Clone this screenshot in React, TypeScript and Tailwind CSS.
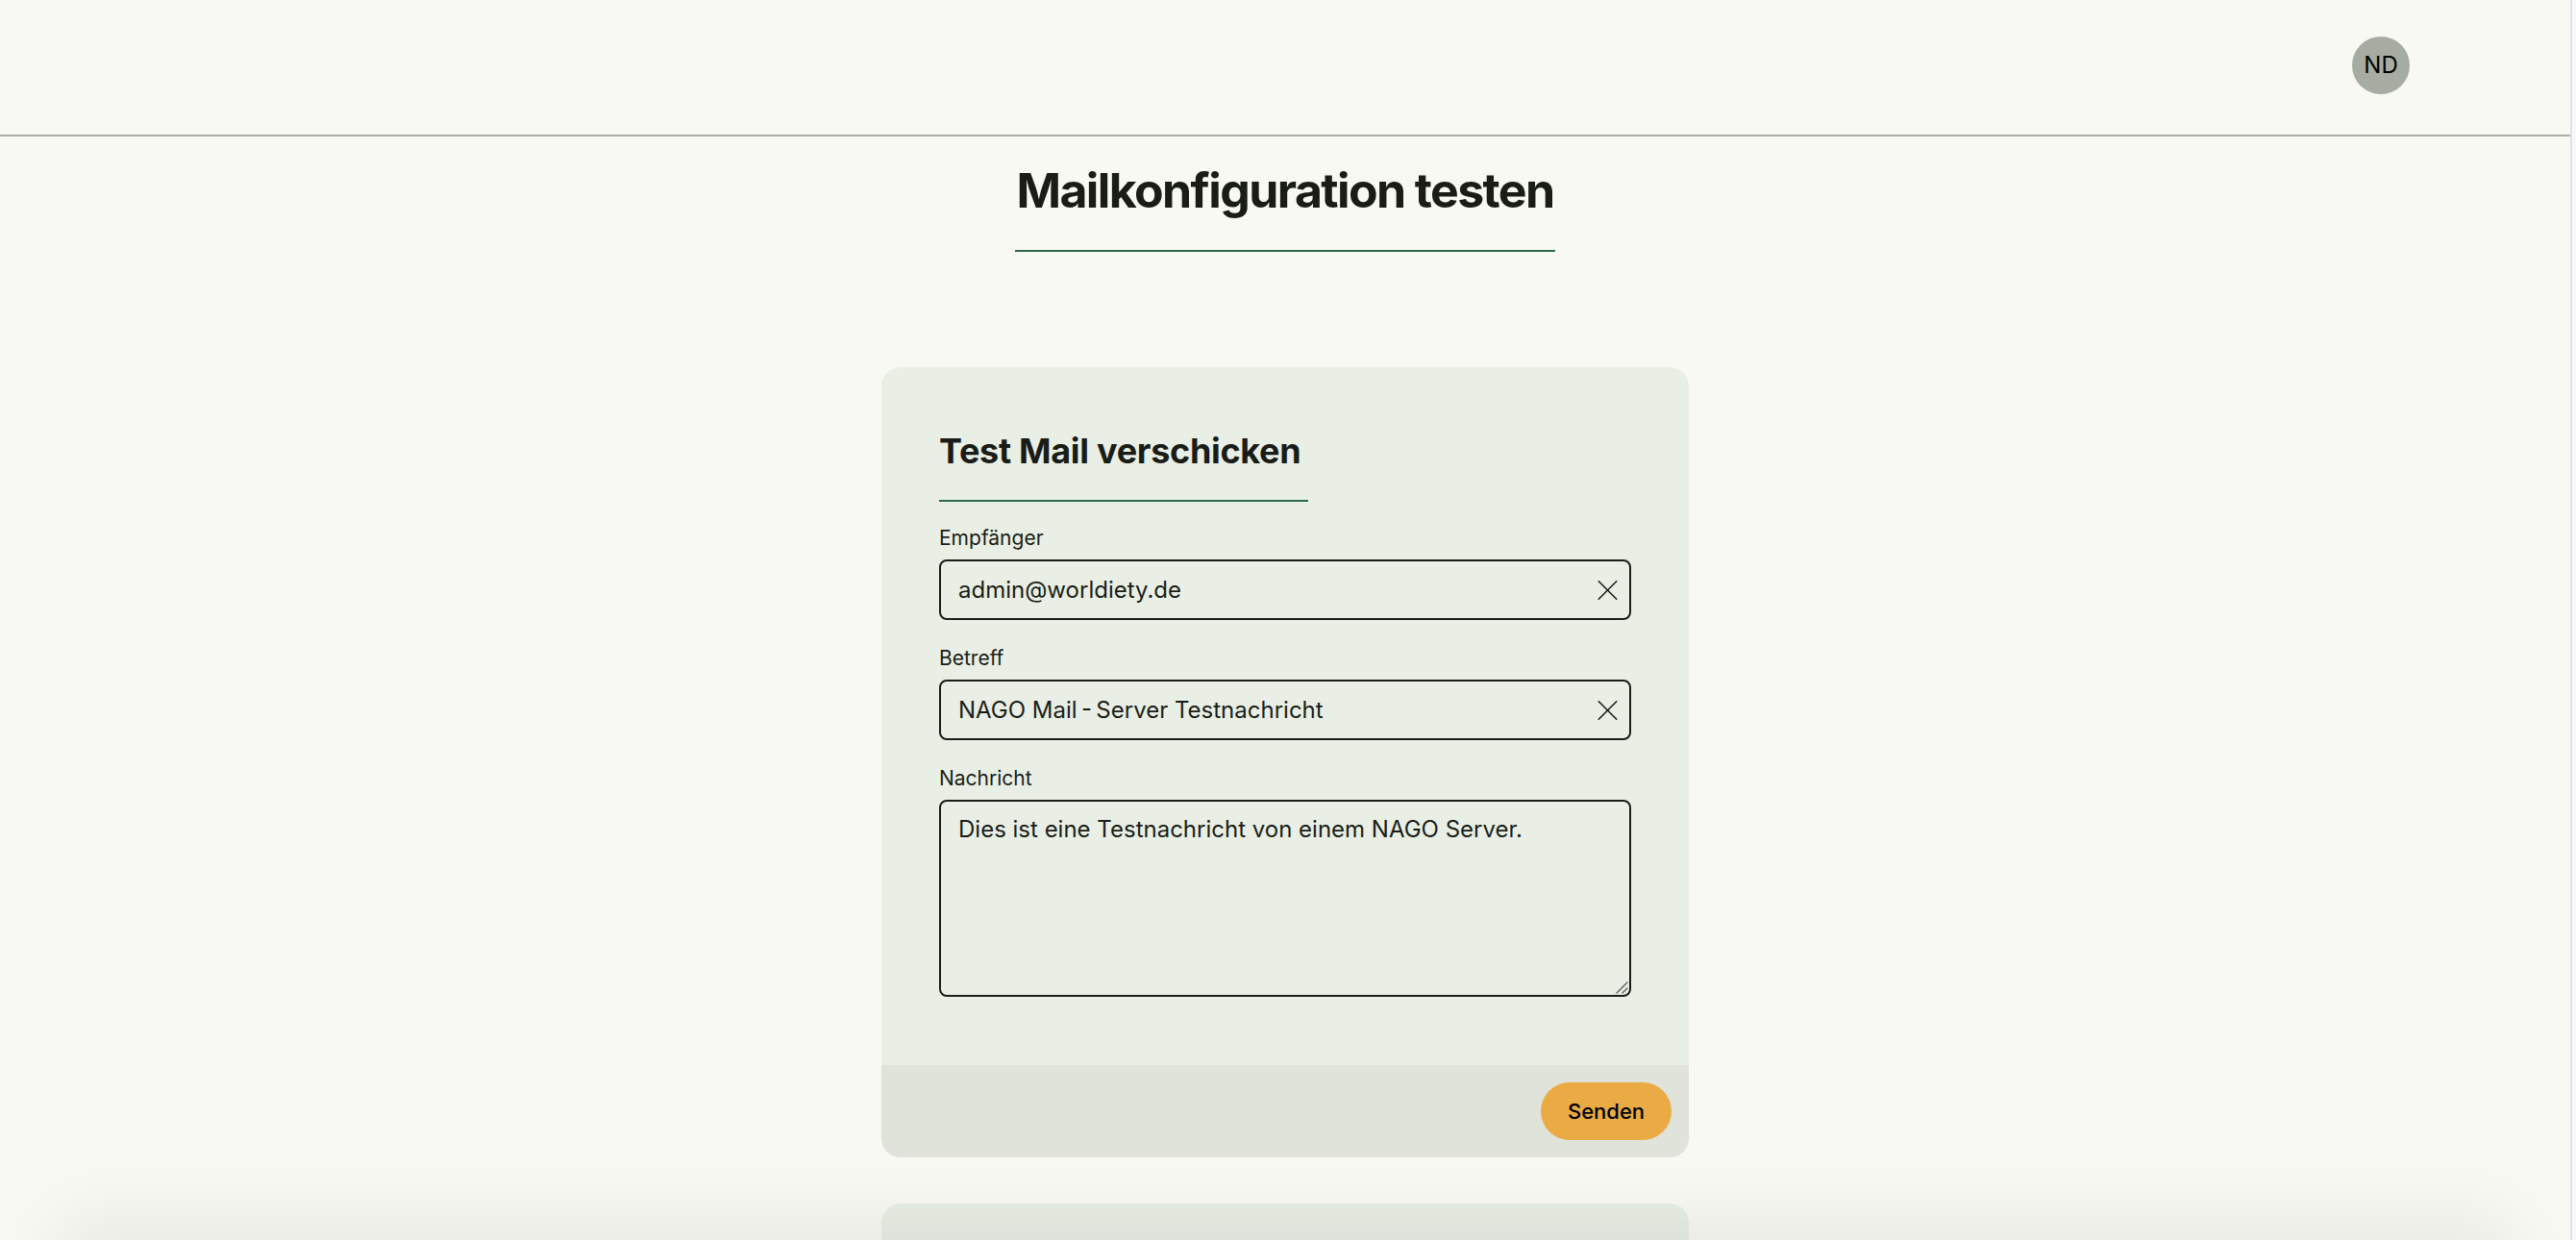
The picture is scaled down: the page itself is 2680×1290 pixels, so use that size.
import { X } from "lucide-react";

const fields = [
  { label: "Empfänger", value: "admin@worldiety.de" },
  { label: "Betreff", value: "NAGO Mail\u2009-\u2009Server Testnachricht" },
];

export default function App() {
  return (
    <div
      className="flex h-[1290px] w-full overflow-hidden bg-[#f8f9f3] text-[#1a1d17]"
      style={{ fontFamily: "Inter, 'Noto Sans', sans-serif" }}
    >
      <div className="relative flex-1 overflow-hidden">
        {/* top bar */}
        <header className="flex h-[142px] items-center justify-end border-b-2 border-[#a8aea5] pr-[167px] pb-[4px]">
          <div className="flex h-[60px] w-[60px] items-center justify-center rounded-full bg-[#a7aca2] text-[24px] text-black">
            ND
          </div>
        </header>

        <main className="flex flex-col items-center">
          {/* page title */}
          <div className="mt-[26px] flex flex-col items-center">
            <h1 className="text-[50px] leading-[60px] font-bold tracking-[-1.6px]">
              Mailkonfiguration testen
            </h1>
            <div className="mt-[32px] h-[2px] w-[562px] bg-[#2d6a46]" />
          </div>

          {/* test mail card */}
          <section className="mt-[120px] w-[840px] overflow-hidden rounded-[20px] bg-[#e9efe5]">
            <div className="px-[60px] pt-[67px] pb-[71px]">
              <h2 className="text-[36px] leading-[40px] font-bold tracking-[-0.3px]">
                Test Mail verschicken
              </h2>
              <div className="mt-[31px] h-[2px] w-[384px] bg-[#2d6a46]" />

              <div className="mt-[24px] flex flex-col gap-[26px]">
                {fields.map((f) => (
                  <div key={f.label} className="flex flex-col gap-[8px]">
                    <label className="text-[21px] leading-[28px]">{f.label}</label>
                    <div className="relative">
                      <input
                        defaultValue={f.value}
                        className="h-[63px] w-full rounded-[8px] border-2 border-[#1a1d17] bg-transparent pr-[50px] pl-[18px] text-[24px] text-[#1a1d17] outline-none"
                      />
                      <X
                        className="absolute top-1/2 right-[6px] -translate-y-1/2 text-[#1a1d17]"
                        size={37}
                        strokeWidth={1}
                      />
                    </div>
                  </div>
                ))}

                <div className="flex flex-col gap-[8px]">
                  <label className="text-[21px] leading-[28px]">Nachricht</label>
                  <div className="relative">
                    <textarea
                      defaultValue="Dies ist eine Testnachricht von einem NAGO Server."
                      className="block h-[205px] w-full resize-none rounded-[8px] border-2 border-[#1a1d17] bg-transparent px-[18px] pt-[11px] text-[24px] leading-[36px] text-[#1a1d17] outline-none"
                    />
                    {/* resize grip */}
                    <svg
                      className="pointer-events-none absolute right-[3px] bottom-[3px]"
                      width="14"
                      height="14"
                      viewBox="0 0 14 14"
                    >
                      <path d="M2 13 L13 2 M8 13 L13 8" stroke="#6b6e68" strokeWidth="1.6" strokeLinecap="round" />
                    </svg>
                  </div>
                </div>
              </div>
            </div>

            <div className="flex h-[96px] items-center justify-end bg-[#dfe3d9] pr-[18px]">
              <button className="h-[60px] w-[136px] rounded-full bg-[#eaab45] text-[22px] font-medium text-black">
                Senden
              </button>
            </div>
          </section>

          {/* next card, cut off by the viewport */}
          <section className="mt-[48px] h-[400px] w-[840px] rounded-[20px] bg-[#e9efe5]" />
        </main>

        {/* soft shadow rising from below the viewport */}
        <div className="pointer-events-none absolute right-[80px] bottom-[-40px] left-[80px] h-[40px] rounded-full bg-black/10 shadow-[0_0_70px_30px_rgba(0,0,0,0.06)]" />
      </div>

      {/* scrollbar track */}
      <div className="w-[6px] border-l-2 border-[#e3e3e3] bg-[#f8f8f8]" />
    </div>
  );
}
